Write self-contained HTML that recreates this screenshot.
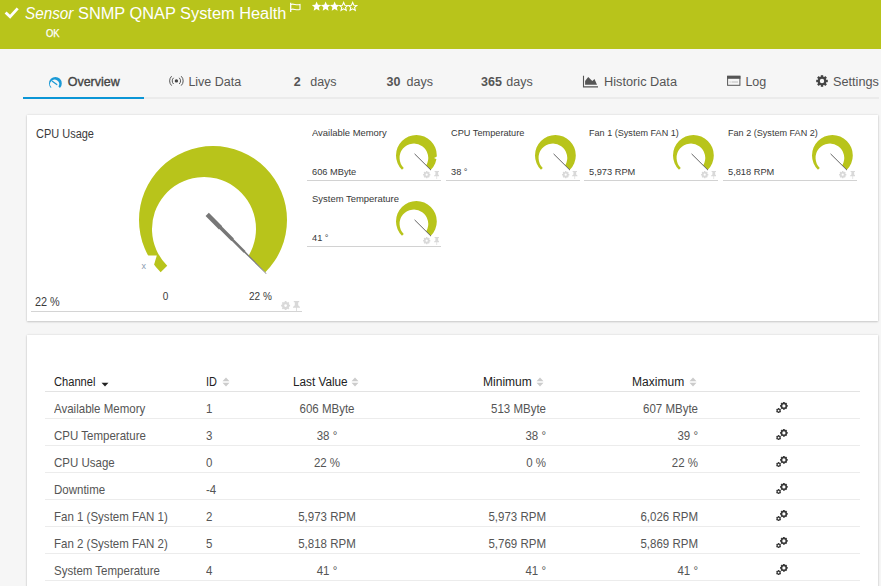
<!DOCTYPE html>
<html><head><meta charset="utf-8"><style>
html,body{margin:0;padding:0;width:881px;height:586px;overflow:hidden;background:#f6f6f6;font-family:"Liberation Sans",sans-serif;}
.a{position:absolute;white-space:pre;line-height:1;}
b{font-weight:bold}
</style></head><body>
<div class="a" style="left:0;top:0;width:881px;height:49px;background:#b8c41b"></div>
<svg class="a" style="left:4px;top:5px" width="16" height="15" viewBox="0 0 16 15"><path d="M1.6 7.4 L6.1 11.8 L13.7 3.4" fill="none" stroke="#fff" stroke-width="2.8"/></svg>
<div class="a" style="left:25px;top:5.86px;font-size:16px;color:#fff;transform:scaleX(0.955);transform-origin:0 0;"><i>Sensor</i></div>
<div class="a" style="left:78.3px;top:5.86px;font-size:16px;color:#fff;transform:scaleX(1.022);transform-origin:0 0;">SNMP QNAP System Health</div>
<div class="a" style="left:45.6px;top:28.21px;font-size:10.5px;color:#fff;transform:scaleX(0.9);transform-origin:0 0;-webkit-text-stroke:0.25px #fff">OK</div>
<svg class="a" style="left:284px;top:0px" width="22" height="16" viewBox="284 0 22 16"><path d="M290.7 2.8 V12" stroke="#fff" stroke-width="1.3"/><path d="M291 4.4 C293.8 3.4 296.2 5.6 300 4.4 V9.4 C296.2 10.6 293.8 8.4 291 9.4" fill="none" stroke="#fff" stroke-width="1.1"/></svg>
<svg class="a" style="left:311px;top:0px" width="50" height="13" viewBox="0 0 50 13"><path d="M5.60,1.60 L6.95,4.74 L10.36,5.05 L7.79,7.31 L8.54,10.65 L5.60,8.90 L2.66,10.65 L3.41,7.31 L0.84,5.05 L4.25,4.74Z" fill="#fff"/><path d="M14.62,1.60 L15.97,4.74 L19.38,5.05 L16.81,7.31 L17.56,10.65 L14.62,8.90 L11.68,10.65 L12.43,7.31 L9.86,5.05 L13.27,4.74Z" fill="#fff"/><path d="M23.64,1.60 L24.99,4.74 L28.40,5.05 L25.83,7.31 L26.58,10.65 L23.64,8.90 L20.70,10.65 L21.45,7.31 L18.88,5.05 L22.29,4.74Z" fill="#fff"/><path d="M32.66,2.40 L33.84,5.18 L36.84,5.44 L34.56,7.42 L35.25,10.36 L32.66,8.80 L30.07,10.36 L30.76,7.42 L28.48,5.44 L31.48,5.18Z" fill="none" stroke="#fff" stroke-width="1.1"/><path d="M41.68,2.40 L42.86,5.18 L45.86,5.44 L43.58,7.42 L44.27,10.36 L41.68,8.80 L39.09,10.36 L39.78,7.42 L37.50,5.44 L40.50,5.18Z" fill="none" stroke="#fff" stroke-width="1.1"/></svg>
<div class="a" style="left:23px;top:97px;width:856px;height:2px;background:#ebebeb"></div>
<div class="a" style="left:23px;top:97px;width:121px;height:2px;background:#0c96d6"></div>
<div class="a" style="left:67.7px;top:76.02px;font-size:12.5px;color:#444;-webkit-text-stroke:0.35px #444">Overview</div>
<div class="a" style="left:188.4px;top:76.02px;font-size:12.5px;color:#555;">Live Data</div>
<div class="a" style="left:293.7px;top:76.02px;font-size:12.5px;color:#555;"><b>2</b></div>
<div class="a" style="left:310.2px;top:76.02px;font-size:12.5px;color:#555;">days</div>
<div class="a" style="left:386.5px;top:76.02px;font-size:12.5px;color:#555;"><b>30</b></div>
<div class="a" style="left:406.5px;top:76.02px;font-size:12.5px;color:#555;">days</div>
<div class="a" style="left:481px;top:76.02px;font-size:12.5px;color:#555;"><b>365</b></div>
<div class="a" style="left:506.3px;top:76.02px;font-size:12.5px;color:#555;">days</div>
<div class="a" style="left:603.5px;top:76.02px;font-size:12.5px;color:#555;transform:scaleX(1.02);transform-origin:0 0;">Historic Data</div>
<div class="a" style="left:745.4px;top:76.02px;font-size:12.5px;color:#555;">Log</div>
<div class="a" style="left:833.3px;top:76.02px;font-size:12.5px;color:#555;transform:scaleX(1.015);transform-origin:0 0;">Settings</div>
<svg class="a" style="left:49.3px;top:76.6px;overflow:visible" width="12.8" height="12.8" viewBox="0 0 148 148"><path d="M21.67 126.33 A74 74 0 1 1 126.33 126.33 L109.65 109.65 A52 52 0 1 0 28.23 119.77 Z" fill="#1b9ad6"/></svg>
<svg class="a" style="left:45px;top:72px" width="22" height="18" viewBox="45 72 22 18"><path d="M52.3 81.2 L56.8 84.6" stroke="#1b9ad6" stroke-width="1.2" stroke-linecap="round"/></svg>
<svg class="a" style="left:165px;top:72px" width="22" height="18" viewBox="165 72 22 18"><circle cx="176.4" cy="80.9" r="1.7" fill="#444"/><path d="M173.6 77.8 A4.2 4.2 0 0 0 173.6 84 M179.2 77.8 A4.2 4.2 0 0 1 179.2 84" fill="none" stroke="#555" stroke-width="1"/><path d="M171.6 76.2 A6.6 6.6 0 0 0 171.6 85.6 M181.2 76.2 A6.6 6.6 0 0 1 181.2 85.6" fill="none" stroke="#555" stroke-width="1"/></svg>
<svg class="a" style="left:578px;top:70px" width="24" height="22" viewBox="578 70 24 22"><path d="M583.5 75.8 V86.9 H598" fill="none" stroke="#555" stroke-width="1.1"/><path d="M585.1 84.8 V81 L588.2 77 L592.3 81.1 L594.5 79 L597 84.8 Z" fill="#555"/></svg>
<svg class="a" style="left:722px;top:70px" width="24" height="22" viewBox="722 70 24 22"><rect x="727.6" y="76.3" width="12.3" height="9" fill="none" stroke="#555" stroke-width="1"/><rect x="727.1" y="75.8" width="13.3" height="3" fill="#555"/><path d="M729.5 82 H730.6 M731.6 82 H738" stroke="#bbb" stroke-width="1.2"/></svg>
<svg class="a" style="left:816px;top:75.4px" width="12" height="12" viewBox="-6 -6 12 12"><rect x="-1.2" y="-5.8" width="2.4" height="2.5" fill="#444" transform="rotate(0)"/><rect x="-1.2" y="-5.8" width="2.4" height="2.5" fill="#444" transform="rotate(45)"/><rect x="-1.2" y="-5.8" width="2.4" height="2.5" fill="#444" transform="rotate(90)"/><rect x="-1.2" y="-5.8" width="2.4" height="2.5" fill="#444" transform="rotate(135)"/><rect x="-1.2" y="-5.8" width="2.4" height="2.5" fill="#444" transform="rotate(180)"/><rect x="-1.2" y="-5.8" width="2.4" height="2.5" fill="#444" transform="rotate(225)"/><rect x="-1.2" y="-5.8" width="2.4" height="2.5" fill="#444" transform="rotate(270)"/><rect x="-1.2" y="-5.8" width="2.4" height="2.5" fill="#444" transform="rotate(315)"/><circle r="3.3" fill="none" stroke="#444" stroke-width="2.2"/></svg>
<div class="a" style="left:27px;top:115px;width:851px;height:206px;background:#fff;box-shadow:0 0 2px rgba(0,0,0,0.13),0 1px 2px rgba(0,0,0,0.15)"></div>
<div class="a" style="left:35.9px;top:127.84px;font-size:12px;color:#3a3a3a;transform:scaleX(0.915);transform-origin:0 0;">CPU Usage</div>
<svg class="a" style="left:139px;top:146px;overflow:visible" width="148" height="148" viewBox="0 0 148 148"><path d="M21.67 126.33 A74 74 0 1 1 126.33 126.33 L109.65 109.65 A52 52 0 1 0 28.23 119.77 Z" fill="#b8c41b"/><path d="M4 109.5 L17.8 109.5 L15.1 118.4 L8 123 Z" fill="#fff"/><path d="M66.57 69.92 L79.97 83.39 L80.32 83.04 L92.32 95.09 L92.67 94.74 L104.66 106.79 L105.01 106.44 L127.12 127.88 L127.48 127.52 L106.15 105.31 L106.50 104.95 L94.51 92.90 L94.87 92.55 L82.88 80.50 L83.23 80.15 L69.83 66.68 Z" fill="#777"/></svg>
<div class="a" style="left:141.6px;top:261.58px;font-size:9px;color:#8a9ab0;">x</div>
<div class="a" style="left:35.4px;top:295.62px;font-size:12.5px;color:#3a3a3a;transform:scaleX(0.87);transform-origin:0 0;">22 %</div>
<div class="a" style="left:162.7px;top:291.74px;font-size:10px;color:#3a3a3a;">0</div>
<div class="a" style="left:249px;top:291.74px;font-size:10px;color:#3a3a3a;">22 %</div>
<svg class="a" style="left:279.80px;top:299.70px" width="11.20" height="11.20" viewBox="279.80 299.70 11.20 11.20"><path d="M283.98 301.88 L284.50 301.71 L284.50 300.79 L286.30 300.79 L286.30 301.71 L286.82 301.88 L287.30 302.13 L287.96 301.48 L289.22 302.74 L288.57 303.40 L288.82 303.88 L288.99 304.40 L289.91 304.40 L289.91 306.20 L288.99 306.20 L288.82 306.72 L288.57 307.20 L289.22 307.86 L287.96 309.12 L287.30 308.47 L286.82 308.72 L286.30 308.89 L286.30 309.81 L284.50 309.81 L284.50 308.89 L283.98 308.72 L283.50 308.47 L282.84 309.12 L281.58 307.86 L282.23 307.20 L281.98 306.72 L281.81 306.20 L280.89 306.20 L280.89 304.40 L281.81 304.40 L281.98 303.88 L282.23 303.40 L281.58 302.74 L282.84 301.48 L283.50 302.13Z M286.75 305.30 A1.35 1.35 0 1 0 284.05 305.30 A1.35 1.35 0 1 0 286.75 305.30 Z" fill="#d9d9d9" fill-rule="evenodd"/></svg>
<svg class="a" style="left:293.00px;top:301.00px" width="7.00" height="10.00" viewBox="0 0 7 10"><path d="M0.8 0 H6.2 V1.3 H5.2 V4.3 L7 5.9 V6.7 H3.9 V10 H3.1 V6.7 H0 V5.9 L1.8 4.3 V1.3 H0.8 Z" fill="#d9d9d9"/></svg>
<div class="a" style="left:31px;top:311px;width:271px;height:1px;background:#d4d4d4"></div>
<div class="a" style="left:312.2px;top:127.77px;font-size:9.6px;color:#383838;transform:scaleX(0.982);transform-origin:0 0;">Available Memory</div>
<div class="a" style="left:312.2px;top:166.67px;font-size:9.6px;color:#383838;transform:scaleX(0.965);transform-origin:0 0;">606 MByte</div>
<svg class="a" style="left:396.1px;top:134.7px;overflow:visible" width="40.8" height="40.8" viewBox="0 0 148 148"><path d="M21.67 126.33 A74 74 0 1 1 126.33 126.33 L109.65 109.65 A52 52 0 1 0 28.23 119.77 Z" fill="#b8c41b"/><path d="M137.9 83.4 L149 77.8 L149 89 Z" fill="#fff"/><path d="M67.5 68.5 L127 127.6" stroke="#5a5a5a" stroke-width="3.4"/><path d="M66.57 69.92 L79.97 83.39 L80.32 83.04 L92.32 95.09 L92.67 94.74 L104.66 106.79 L105.01 106.44 L127.12 127.88 L127.48 127.52 L106.15 105.31 L106.50 104.95 L94.51 92.90 L94.87 92.55 L82.88 80.50 L83.23 80.15 L69.83 66.68 Z" fill="none"/></svg>
<svg class="a" style="left:422.30px;top:170.10px" width="9.40" height="9.40" viewBox="422.30 170.10 9.40 9.40"><path d="M425.85 172.03 L426.27 171.89 L426.28 171.17 L427.72 171.17 L427.73 171.89 L428.15 172.03 L428.54 172.23 L429.06 171.72 L430.08 172.74 L429.57 173.26 L429.77 173.65 L429.91 174.07 L430.63 174.08 L430.63 175.52 L429.91 175.53 L429.77 175.95 L429.57 176.34 L430.08 176.86 L429.06 177.88 L428.54 177.37 L428.15 177.57 L427.73 177.71 L427.72 178.43 L426.28 178.43 L426.27 177.71 L425.85 177.57 L425.46 177.37 L424.94 177.88 L423.92 176.86 L424.43 176.34 L424.23 175.95 L424.09 175.53 L423.37 175.52 L423.37 174.08 L424.09 174.07 L424.23 173.65 L424.43 173.26 L423.92 172.74 L424.94 171.72 L425.46 172.23Z M428.10 174.80 A1.1 1.1 0 1 0 425.90 174.80 A1.1 1.1 0 1 0 428.10 174.80 Z" fill="#d9d9d9" fill-rule="evenodd"/></svg>
<svg class="a" style="left:433.70px;top:171.30px" width="5.60" height="8.00" viewBox="0 0 7 10"><path d="M0.8 0 H6.2 V1.3 H5.2 V4.3 L7 5.9 V6.7 H3.9 V10 H3.1 V6.7 H0 V5.9 L1.8 4.3 V1.3 H0.8 Z" fill="#d9d9d9"/></svg>
<div class="a" style="left:307.0px;top:180px;width:134px;height:1px;background:#d2d2d2"></div>
<div class="a" style="left:450.79999999999995px;top:127.77px;font-size:9.6px;color:#383838;transform:scaleX(0.958);transform-origin:0 0;">CPU Temperature</div>
<div class="a" style="left:450.79999999999995px;top:166.67px;font-size:9.6px;color:#383838;transform:scaleX(0.965);transform-origin:0 0;">38 °</div>
<svg class="a" style="left:534.6999999999999px;top:134.7px;overflow:visible" width="40.8" height="40.8" viewBox="0 0 148 148"><path d="M21.67 126.33 A74 74 0 1 1 126.33 126.33 L109.65 109.65 A52 52 0 1 0 28.23 119.77 Z" fill="#b8c41b"/><path d="M67.5 68.5 L127 127.6" stroke="#5a5a5a" stroke-width="3.4"/><path d="M66.57 69.92 L79.97 83.39 L80.32 83.04 L92.32 95.09 L92.67 94.74 L104.66 106.79 L105.01 106.44 L127.12 127.88 L127.48 127.52 L106.15 105.31 L106.50 104.95 L94.51 92.90 L94.87 92.55 L82.88 80.50 L83.23 80.15 L69.83 66.68 Z" fill="none"/></svg>
<svg class="a" style="left:560.90px;top:170.10px" width="9.40" height="9.40" viewBox="560.90 170.10 9.40 9.40"><path d="M564.45 172.03 L564.87 171.89 L564.88 171.17 L566.32 171.17 L566.33 171.89 L566.75 172.03 L567.14 172.23 L567.66 171.72 L568.68 172.74 L568.17 173.26 L568.37 173.65 L568.51 174.07 L569.23 174.08 L569.23 175.52 L568.51 175.53 L568.37 175.95 L568.17 176.34 L568.68 176.86 L567.66 177.88 L567.14 177.37 L566.75 177.57 L566.33 177.71 L566.32 178.43 L564.88 178.43 L564.87 177.71 L564.45 177.57 L564.06 177.37 L563.54 177.88 L562.52 176.86 L563.03 176.34 L562.83 175.95 L562.69 175.53 L561.97 175.52 L561.97 174.08 L562.69 174.07 L562.83 173.65 L563.03 173.26 L562.52 172.74 L563.54 171.72 L564.06 172.23Z M566.70 174.80 A1.1 1.1 0 1 0 564.50 174.80 A1.1 1.1 0 1 0 566.70 174.80 Z" fill="#d9d9d9" fill-rule="evenodd"/></svg>
<svg class="a" style="left:572.30px;top:171.30px" width="5.60" height="8.00" viewBox="0 0 7 10"><path d="M0.8 0 H6.2 V1.3 H5.2 V4.3 L7 5.9 V6.7 H3.9 V10 H3.1 V6.7 H0 V5.9 L1.8 4.3 V1.3 H0.8 Z" fill="#d9d9d9"/></svg>
<div class="a" style="left:445.6px;top:180px;width:134px;height:1px;background:#d2d2d2"></div>
<div class="a" style="left:589.4px;top:127.77px;font-size:9.6px;color:#383838;transform:scaleX(0.946);transform-origin:0 0;">Fan 1 (System FAN 1)</div>
<div class="a" style="left:589.4px;top:166.67px;font-size:9.6px;color:#383838;transform:scaleX(0.965);transform-origin:0 0;">5,973 RPM</div>
<svg class="a" style="left:673.3px;top:134.7px;overflow:visible" width="40.8" height="40.8" viewBox="0 0 148 148"><path d="M21.67 126.33 A74 74 0 1 1 126.33 126.33 L109.65 109.65 A52 52 0 1 0 28.23 119.77 Z" fill="#b8c41b"/><path d="M67.5 68.5 L127 127.6" stroke="#5a5a5a" stroke-width="3.4"/><path d="M66.57 69.92 L79.97 83.39 L80.32 83.04 L92.32 95.09 L92.67 94.74 L104.66 106.79 L105.01 106.44 L127.12 127.88 L127.48 127.52 L106.15 105.31 L106.50 104.95 L94.51 92.90 L94.87 92.55 L82.88 80.50 L83.23 80.15 L69.83 66.68 Z" fill="none"/></svg>
<svg class="a" style="left:699.50px;top:170.10px" width="9.40" height="9.40" viewBox="699.50 170.10 9.40 9.40"><path d="M703.05 172.03 L703.47 171.89 L703.48 171.17 L704.92 171.17 L704.93 171.89 L705.35 172.03 L705.74 172.23 L706.26 171.72 L707.28 172.74 L706.77 173.26 L706.97 173.65 L707.11 174.07 L707.83 174.08 L707.83 175.52 L707.11 175.53 L706.97 175.95 L706.77 176.34 L707.28 176.86 L706.26 177.88 L705.74 177.37 L705.35 177.57 L704.93 177.71 L704.92 178.43 L703.48 178.43 L703.47 177.71 L703.05 177.57 L702.66 177.37 L702.14 177.88 L701.12 176.86 L701.63 176.34 L701.43 175.95 L701.29 175.53 L700.57 175.52 L700.57 174.08 L701.29 174.07 L701.43 173.65 L701.63 173.26 L701.12 172.74 L702.14 171.72 L702.66 172.23Z M705.30 174.80 A1.1 1.1 0 1 0 703.10 174.80 A1.1 1.1 0 1 0 705.30 174.80 Z" fill="#d9d9d9" fill-rule="evenodd"/></svg>
<svg class="a" style="left:710.90px;top:171.30px" width="5.60" height="8.00" viewBox="0 0 7 10"><path d="M0.8 0 H6.2 V1.3 H5.2 V4.3 L7 5.9 V6.7 H3.9 V10 H3.1 V6.7 H0 V5.9 L1.8 4.3 V1.3 H0.8 Z" fill="#d9d9d9"/></svg>
<div class="a" style="left:584.2px;top:180px;width:134px;height:1px;background:#d2d2d2"></div>
<div class="a" style="left:728.0px;top:127.77px;font-size:9.6px;color:#383838;transform:scaleX(0.946);transform-origin:0 0;">Fan 2 (System FAN 2)</div>
<div class="a" style="left:728.0px;top:166.67px;font-size:9.6px;color:#383838;transform:scaleX(0.965);transform-origin:0 0;">5,818 RPM</div>
<svg class="a" style="left:811.9px;top:134.7px;overflow:visible" width="40.8" height="40.8" viewBox="0 0 148 148"><path d="M21.67 126.33 A74 74 0 1 1 126.33 126.33 L109.65 109.65 A52 52 0 1 0 28.23 119.77 Z" fill="#b8c41b"/><path d="M67.5 68.5 L127 127.6" stroke="#5a5a5a" stroke-width="3.4"/><path d="M66.57 69.92 L79.97 83.39 L80.32 83.04 L92.32 95.09 L92.67 94.74 L104.66 106.79 L105.01 106.44 L127.12 127.88 L127.48 127.52 L106.15 105.31 L106.50 104.95 L94.51 92.90 L94.87 92.55 L82.88 80.50 L83.23 80.15 L69.83 66.68 Z" fill="none"/></svg>
<svg class="a" style="left:838.10px;top:170.10px" width="9.40" height="9.40" viewBox="838.10 170.10 9.40 9.40"><path d="M841.65 172.03 L842.07 171.89 L842.08 171.17 L843.52 171.17 L843.53 171.89 L843.95 172.03 L844.34 172.23 L844.86 171.72 L845.88 172.74 L845.37 173.26 L845.57 173.65 L845.71 174.07 L846.43 174.08 L846.43 175.52 L845.71 175.53 L845.57 175.95 L845.37 176.34 L845.88 176.86 L844.86 177.88 L844.34 177.37 L843.95 177.57 L843.53 177.71 L843.52 178.43 L842.08 178.43 L842.07 177.71 L841.65 177.57 L841.26 177.37 L840.74 177.88 L839.72 176.86 L840.23 176.34 L840.03 175.95 L839.89 175.53 L839.17 175.52 L839.17 174.08 L839.89 174.07 L840.03 173.65 L840.23 173.26 L839.72 172.74 L840.74 171.72 L841.26 172.23Z M843.90 174.80 A1.1 1.1 0 1 0 841.70 174.80 A1.1 1.1 0 1 0 843.90 174.80 Z" fill="#d9d9d9" fill-rule="evenodd"/></svg>
<svg class="a" style="left:849.50px;top:171.30px" width="5.60" height="8.00" viewBox="0 0 7 10"><path d="M0.8 0 H6.2 V1.3 H5.2 V4.3 L7 5.9 V6.7 H3.9 V10 H3.1 V6.7 H0 V5.9 L1.8 4.3 V1.3 H0.8 Z" fill="#d9d9d9"/></svg>
<div class="a" style="left:722.8px;top:180px;width:134px;height:1px;background:#d2d2d2"></div>
<div class="a" style="left:312.2px;top:193.77px;font-size:9.6px;color:#383838;transform:scaleX(0.985);transform-origin:0 0;">System Temperature</div>
<div class="a" style="left:312.2px;top:232.67px;font-size:9.6px;color:#383838;transform:scaleX(0.965);transform-origin:0 0;">41 °</div>
<svg class="a" style="left:396.1px;top:200.7px;overflow:visible" width="40.8" height="40.8" viewBox="0 0 148 148"><path d="M21.67 126.33 A74 74 0 1 1 126.33 126.33 L109.65 109.65 A52 52 0 1 0 28.23 119.77 Z" fill="#b8c41b"/><path d="M67.5 68.5 L127 127.6" stroke="#5a5a5a" stroke-width="3.4"/><path d="M66.57 69.92 L79.97 83.39 L80.32 83.04 L92.32 95.09 L92.67 94.74 L104.66 106.79 L105.01 106.44 L127.12 127.88 L127.48 127.52 L106.15 105.31 L106.50 104.95 L94.51 92.90 L94.87 92.55 L82.88 80.50 L83.23 80.15 L69.83 66.68 Z" fill="none"/></svg>
<svg class="a" style="left:422.30px;top:236.10px" width="9.40" height="9.40" viewBox="422.30 236.10 9.40 9.40"><path d="M425.85 238.03 L426.27 237.89 L426.28 237.17 L427.72 237.17 L427.73 237.89 L428.15 238.03 L428.54 238.23 L429.06 237.72 L430.08 238.74 L429.57 239.26 L429.77 239.65 L429.91 240.07 L430.63 240.08 L430.63 241.52 L429.91 241.53 L429.77 241.95 L429.57 242.34 L430.08 242.86 L429.06 243.88 L428.54 243.37 L428.15 243.57 L427.73 243.71 L427.72 244.43 L426.28 244.43 L426.27 243.71 L425.85 243.57 L425.46 243.37 L424.94 243.88 L423.92 242.86 L424.43 242.34 L424.23 241.95 L424.09 241.53 L423.37 241.52 L423.37 240.08 L424.09 240.07 L424.23 239.65 L424.43 239.26 L423.92 238.74 L424.94 237.72 L425.46 238.23Z M428.10 240.80 A1.1 1.1 0 1 0 425.90 240.80 A1.1 1.1 0 1 0 428.10 240.80 Z" fill="#d9d9d9" fill-rule="evenodd"/></svg>
<svg class="a" style="left:433.70px;top:237.30px" width="5.60" height="8.00" viewBox="0 0 7 10"><path d="M0.8 0 H6.2 V1.3 H5.2 V4.3 L7 5.9 V6.7 H3.9 V10 H3.1 V6.7 H0 V5.9 L1.8 4.3 V1.3 H0.8 Z" fill="#d9d9d9"/></svg>
<div class="a" style="left:307.0px;top:246px;width:134px;height:1px;background:#d2d2d2"></div>
<div class="a" style="left:27px;top:335px;width:851px;height:260px;background:#fff;box-shadow:0 0 2px rgba(0,0,0,0.13),0 1px 2px rgba(0,0,0,0.15)"></div>
<div class="a" style="left:53.8px;top:375.92px;font-size:12.5px;color:#222;transform:scaleX(0.889);transform-origin:0 0;">Channel</div>
<svg class="a" style="left:101px;top:382px" width="8" height="5" viewBox="0 0 8 5"><path d="M0.5 0.8 H7.5 L4 4.5 Z" fill="#222"/></svg>
<div class="a" style="left:206px;top:375.92px;font-size:12.5px;color:#222;transform:scaleX(0.874);transform-origin:0 0;">ID</div>
<svg class="a" style="left:221.5px;top:377px" width="8" height="10" viewBox="0 0 8 10"><path d="M0.5 4.2 L4 0.5 L7.5 4.2 Z M0.5 5.8 H7.5 L4 9.5 Z" fill="#ccc"/></svg>
<div class="a" style="left:292.7px;top:375.92px;font-size:12.5px;color:#222;transform:scaleX(0.94);transform-origin:0 0;">Last Value</div>
<svg class="a" style="left:351px;top:377px" width="8" height="10" viewBox="0 0 8 10"><path d="M0.5 4.2 L4 0.5 L7.5 4.2 Z M0.5 5.8 H7.5 L4 9.5 Z" fill="#ccc"/></svg>
<div class="a" style="left:482.5px;top:375.92px;font-size:12.5px;color:#222;transform:scaleX(0.963);transform-origin:0 0;">Minimum</div>
<svg class="a" style="left:536px;top:377px" width="8" height="10" viewBox="0 0 8 10"><path d="M0.5 4.2 L4 0.5 L7.5 4.2 Z M0.5 5.8 H7.5 L4 9.5 Z" fill="#ccc"/></svg>
<div class="a" style="left:631.9px;top:375.92px;font-size:12.5px;color:#222;transform:scaleX(0.963);transform-origin:0 0;">Maximum</div>
<svg class="a" style="left:688.5px;top:377px" width="8" height="10" viewBox="0 0 8 10"><path d="M0.5 4.2 L4 0.5 L7.5 4.2 Z M0.5 5.8 H7.5 L4 9.5 Z" fill="#ccc"/></svg>
<div class="a" style="left:45px;top:391px;width:815px;height:1px;background:#e3e3e3"></div>
<div class="a" style="left:54px;top:401.50px;font-size:13px;color:#555;transform:scaleX(0.885);transform-origin:0 0;">Available Memory</div>
<div class="a" style="left:206px;top:401.50px;font-size:13px;color:#555;transform:scaleX(0.885);transform-origin:0 0;">1</div>
<div class="a" style="left:177.2px;width:300px;text-align:center;top:401.50px;font-size:13px;color:#555;transform:scaleX(0.885);transform-origin:150px 0">606 MByte</div>
<div class="a" style="left:245.5px;width:300px;text-align:right;top:401.50px;font-size:13px;color:#555;transform:scaleX(0.885);transform-origin:300px 0">513 MByte</div>
<div class="a" style="left:397.5px;width:300px;text-align:right;top:401.50px;font-size:13px;color:#555;transform:scaleX(0.885);transform-origin:300px 0">607 MByte</div>
<svg class="a" style="left:779.40px;top:400.50px" width="9.80" height="9.80" viewBox="779.40 400.50 9.80 9.80"><path d="M783.04 402.35 L783.42 402.22 L783.46 401.59 L785.14 401.59 L785.18 402.22 L785.56 402.35 L785.93 402.53 L786.40 402.12 L787.58 403.30 L787.17 403.77 L787.35 404.14 L787.48 404.52 L788.11 404.56 L788.11 406.24 L787.48 406.28 L787.35 406.66 L787.17 407.03 L787.58 407.50 L786.40 408.68 L785.93 408.27 L785.56 408.45 L785.18 408.58 L785.14 409.21 L783.46 409.21 L783.42 408.58 L783.04 408.45 L782.67 408.27 L782.20 408.68 L781.02 407.50 L781.43 407.03 L781.25 406.66 L781.12 406.28 L780.49 406.24 L780.49 404.56 L781.12 404.52 L781.25 404.14 L781.43 403.77 L781.02 403.30 L782.20 402.12 L782.67 402.53Z M785.90 405.40 A1.6 1.6 0 1 0 782.70 405.40 A1.6 1.6 0 1 0 785.90 405.40 Z" fill="#383838" fill-rule="evenodd"/></svg><svg class="a" style="left:775.10px;top:406.90px" width="7.20" height="7.20" viewBox="775.10 406.90 7.20 7.20"><path d="M777.65 408.68 L777.96 408.53 L777.96 408.01 L779.44 408.01 L779.44 408.53 L779.75 408.68 L780.03 408.88 L780.49 408.61 L781.23 409.89 L780.77 410.16 L780.80 410.50 L780.77 410.84 L781.23 411.11 L780.49 412.39 L780.03 412.12 L779.75 412.32 L779.44 412.47 L779.44 412.99 L777.96 412.99 L777.96 412.47 L777.65 412.32 L777.37 412.12 L776.91 412.39 L776.17 411.11 L776.63 410.84 L776.60 410.50 L776.63 410.16 L776.17 409.89 L776.91 408.61 L777.37 408.88Z M779.55 410.50 A0.85 0.85 0 1 0 777.85 410.50 A0.85 0.85 0 1 0 779.55 410.50 Z" fill="#383838" fill-rule="evenodd"/></svg>
<div class="a" style="left:45px;top:418px;width:815px;height:1px;background:#ececec"></div>
<div class="a" style="left:54px;top:428.50px;font-size:13px;color:#555;transform:scaleX(0.885);transform-origin:0 0;">CPU Temperature</div>
<div class="a" style="left:206px;top:428.50px;font-size:13px;color:#555;transform:scaleX(0.885);transform-origin:0 0;">3</div>
<div class="a" style="left:177.2px;width:300px;text-align:center;top:428.50px;font-size:13px;color:#555;transform:scaleX(0.885);transform-origin:150px 0">38 °</div>
<div class="a" style="left:245.5px;width:300px;text-align:right;top:428.50px;font-size:13px;color:#555;transform:scaleX(0.885);transform-origin:300px 0">38 °</div>
<div class="a" style="left:397.5px;width:300px;text-align:right;top:428.50px;font-size:13px;color:#555;transform:scaleX(0.885);transform-origin:300px 0">39 °</div>
<svg class="a" style="left:779.40px;top:427.50px" width="9.80" height="9.80" viewBox="779.40 427.50 9.80 9.80"><path d="M783.04 429.35 L783.42 429.22 L783.46 428.59 L785.14 428.59 L785.18 429.22 L785.56 429.35 L785.93 429.53 L786.40 429.12 L787.58 430.30 L787.17 430.77 L787.35 431.14 L787.48 431.52 L788.11 431.56 L788.11 433.24 L787.48 433.28 L787.35 433.66 L787.17 434.03 L787.58 434.50 L786.40 435.68 L785.93 435.27 L785.56 435.45 L785.18 435.58 L785.14 436.21 L783.46 436.21 L783.42 435.58 L783.04 435.45 L782.67 435.27 L782.20 435.68 L781.02 434.50 L781.43 434.03 L781.25 433.66 L781.12 433.28 L780.49 433.24 L780.49 431.56 L781.12 431.52 L781.25 431.14 L781.43 430.77 L781.02 430.30 L782.20 429.12 L782.67 429.53Z M785.90 432.40 A1.6 1.6 0 1 0 782.70 432.40 A1.6 1.6 0 1 0 785.90 432.40 Z" fill="#383838" fill-rule="evenodd"/></svg><svg class="a" style="left:775.10px;top:433.90px" width="7.20" height="7.20" viewBox="775.10 433.90 7.20 7.20"><path d="M777.65 435.68 L777.96 435.53 L777.96 435.01 L779.44 435.01 L779.44 435.53 L779.75 435.68 L780.03 435.88 L780.49 435.61 L781.23 436.89 L780.77 437.16 L780.80 437.50 L780.77 437.84 L781.23 438.11 L780.49 439.39 L780.03 439.12 L779.75 439.32 L779.44 439.47 L779.44 439.99 L777.96 439.99 L777.96 439.47 L777.65 439.32 L777.37 439.12 L776.91 439.39 L776.17 438.11 L776.63 437.84 L776.60 437.50 L776.63 437.16 L776.17 436.89 L776.91 435.61 L777.37 435.88Z M779.55 437.50 A0.85 0.85 0 1 0 777.85 437.50 A0.85 0.85 0 1 0 779.55 437.50 Z" fill="#383838" fill-rule="evenodd"/></svg>
<div class="a" style="left:45px;top:445px;width:815px;height:1px;background:#ececec"></div>
<div class="a" style="left:54px;top:455.50px;font-size:13px;color:#555;transform:scaleX(0.885);transform-origin:0 0;">CPU Usage</div>
<div class="a" style="left:206px;top:455.50px;font-size:13px;color:#555;transform:scaleX(0.885);transform-origin:0 0;">0</div>
<div class="a" style="left:177.2px;width:300px;text-align:center;top:455.50px;font-size:13px;color:#555;transform:scaleX(0.885);transform-origin:150px 0">22 %</div>
<div class="a" style="left:245.5px;width:300px;text-align:right;top:455.50px;font-size:13px;color:#555;transform:scaleX(0.885);transform-origin:300px 0">0 %</div>
<div class="a" style="left:397.5px;width:300px;text-align:right;top:455.50px;font-size:13px;color:#555;transform:scaleX(0.885);transform-origin:300px 0">22 %</div>
<svg class="a" style="left:779.40px;top:454.50px" width="9.80" height="9.80" viewBox="779.40 454.50 9.80 9.80"><path d="M783.04 456.35 L783.42 456.22 L783.46 455.59 L785.14 455.59 L785.18 456.22 L785.56 456.35 L785.93 456.53 L786.40 456.12 L787.58 457.30 L787.17 457.77 L787.35 458.14 L787.48 458.52 L788.11 458.56 L788.11 460.24 L787.48 460.28 L787.35 460.66 L787.17 461.03 L787.58 461.50 L786.40 462.68 L785.93 462.27 L785.56 462.45 L785.18 462.58 L785.14 463.21 L783.46 463.21 L783.42 462.58 L783.04 462.45 L782.67 462.27 L782.20 462.68 L781.02 461.50 L781.43 461.03 L781.25 460.66 L781.12 460.28 L780.49 460.24 L780.49 458.56 L781.12 458.52 L781.25 458.14 L781.43 457.77 L781.02 457.30 L782.20 456.12 L782.67 456.53Z M785.90 459.40 A1.6 1.6 0 1 0 782.70 459.40 A1.6 1.6 0 1 0 785.90 459.40 Z" fill="#383838" fill-rule="evenodd"/></svg><svg class="a" style="left:775.10px;top:460.90px" width="7.20" height="7.20" viewBox="775.10 460.90 7.20 7.20"><path d="M777.65 462.68 L777.96 462.53 L777.96 462.01 L779.44 462.01 L779.44 462.53 L779.75 462.68 L780.03 462.88 L780.49 462.61 L781.23 463.89 L780.77 464.16 L780.80 464.50 L780.77 464.84 L781.23 465.11 L780.49 466.39 L780.03 466.12 L779.75 466.32 L779.44 466.47 L779.44 466.99 L777.96 466.99 L777.96 466.47 L777.65 466.32 L777.37 466.12 L776.91 466.39 L776.17 465.11 L776.63 464.84 L776.60 464.50 L776.63 464.16 L776.17 463.89 L776.91 462.61 L777.37 462.88Z M779.55 464.50 A0.85 0.85 0 1 0 777.85 464.50 A0.85 0.85 0 1 0 779.55 464.50 Z" fill="#383838" fill-rule="evenodd"/></svg>
<div class="a" style="left:45px;top:472px;width:815px;height:1px;background:#ececec"></div>
<div class="a" style="left:54px;top:482.50px;font-size:13px;color:#555;transform:scaleX(0.885);transform-origin:0 0;">Downtime</div>
<div class="a" style="left:206px;top:482.50px;font-size:13px;color:#555;transform:scaleX(0.885);transform-origin:0 0;">-4</div>
<div class="a" style="left:177.2px;width:300px;text-align:center;top:482.50px;font-size:13px;color:#555;transform:scaleX(0.885);transform-origin:150px 0"></div>
<div class="a" style="left:245.5px;width:300px;text-align:right;top:482.50px;font-size:13px;color:#555;transform:scaleX(0.885);transform-origin:300px 0"></div>
<div class="a" style="left:397.5px;width:300px;text-align:right;top:482.50px;font-size:13px;color:#555;transform:scaleX(0.885);transform-origin:300px 0"></div>
<svg class="a" style="left:779.40px;top:481.50px" width="9.80" height="9.80" viewBox="779.40 481.50 9.80 9.80"><path d="M783.04 483.35 L783.42 483.22 L783.46 482.59 L785.14 482.59 L785.18 483.22 L785.56 483.35 L785.93 483.53 L786.40 483.12 L787.58 484.30 L787.17 484.77 L787.35 485.14 L787.48 485.52 L788.11 485.56 L788.11 487.24 L787.48 487.28 L787.35 487.66 L787.17 488.03 L787.58 488.50 L786.40 489.68 L785.93 489.27 L785.56 489.45 L785.18 489.58 L785.14 490.21 L783.46 490.21 L783.42 489.58 L783.04 489.45 L782.67 489.27 L782.20 489.68 L781.02 488.50 L781.43 488.03 L781.25 487.66 L781.12 487.28 L780.49 487.24 L780.49 485.56 L781.12 485.52 L781.25 485.14 L781.43 484.77 L781.02 484.30 L782.20 483.12 L782.67 483.53Z M785.90 486.40 A1.6 1.6 0 1 0 782.70 486.40 A1.6 1.6 0 1 0 785.90 486.40 Z" fill="#383838" fill-rule="evenodd"/></svg><svg class="a" style="left:775.10px;top:487.90px" width="7.20" height="7.20" viewBox="775.10 487.90 7.20 7.20"><path d="M777.65 489.68 L777.96 489.53 L777.96 489.01 L779.44 489.01 L779.44 489.53 L779.75 489.68 L780.03 489.88 L780.49 489.61 L781.23 490.89 L780.77 491.16 L780.80 491.50 L780.77 491.84 L781.23 492.11 L780.49 493.39 L780.03 493.12 L779.75 493.32 L779.44 493.47 L779.44 493.99 L777.96 493.99 L777.96 493.47 L777.65 493.32 L777.37 493.12 L776.91 493.39 L776.17 492.11 L776.63 491.84 L776.60 491.50 L776.63 491.16 L776.17 490.89 L776.91 489.61 L777.37 489.88Z M779.55 491.50 A0.85 0.85 0 1 0 777.85 491.50 A0.85 0.85 0 1 0 779.55 491.50 Z" fill="#383838" fill-rule="evenodd"/></svg>
<div class="a" style="left:45px;top:499px;width:815px;height:1px;background:#ececec"></div>
<div class="a" style="left:54px;top:509.50px;font-size:13px;color:#555;transform:scaleX(0.885);transform-origin:0 0;">Fan 1 (System FAN 1)</div>
<div class="a" style="left:206px;top:509.50px;font-size:13px;color:#555;transform:scaleX(0.885);transform-origin:0 0;">2</div>
<div class="a" style="left:177.2px;width:300px;text-align:center;top:509.50px;font-size:13px;color:#555;transform:scaleX(0.885);transform-origin:150px 0">5,973 RPM</div>
<div class="a" style="left:245.5px;width:300px;text-align:right;top:509.50px;font-size:13px;color:#555;transform:scaleX(0.885);transform-origin:300px 0">5,973 RPM</div>
<div class="a" style="left:397.5px;width:300px;text-align:right;top:509.50px;font-size:13px;color:#555;transform:scaleX(0.885);transform-origin:300px 0">6,026 RPM</div>
<svg class="a" style="left:779.40px;top:508.50px" width="9.80" height="9.80" viewBox="779.40 508.50 9.80 9.80"><path d="M783.04 510.35 L783.42 510.22 L783.46 509.59 L785.14 509.59 L785.18 510.22 L785.56 510.35 L785.93 510.53 L786.40 510.12 L787.58 511.30 L787.17 511.77 L787.35 512.14 L787.48 512.52 L788.11 512.56 L788.11 514.24 L787.48 514.28 L787.35 514.66 L787.17 515.03 L787.58 515.50 L786.40 516.68 L785.93 516.27 L785.56 516.45 L785.18 516.58 L785.14 517.21 L783.46 517.21 L783.42 516.58 L783.04 516.45 L782.67 516.27 L782.20 516.68 L781.02 515.50 L781.43 515.03 L781.25 514.66 L781.12 514.28 L780.49 514.24 L780.49 512.56 L781.12 512.52 L781.25 512.14 L781.43 511.77 L781.02 511.30 L782.20 510.12 L782.67 510.53Z M785.90 513.40 A1.6 1.6 0 1 0 782.70 513.40 A1.6 1.6 0 1 0 785.90 513.40 Z" fill="#383838" fill-rule="evenodd"/></svg><svg class="a" style="left:775.10px;top:514.90px" width="7.20" height="7.20" viewBox="775.10 514.90 7.20 7.20"><path d="M777.65 516.68 L777.96 516.53 L777.96 516.01 L779.44 516.01 L779.44 516.53 L779.75 516.68 L780.03 516.88 L780.49 516.61 L781.23 517.89 L780.77 518.16 L780.80 518.50 L780.77 518.84 L781.23 519.11 L780.49 520.39 L780.03 520.12 L779.75 520.32 L779.44 520.47 L779.44 520.99 L777.96 520.99 L777.96 520.47 L777.65 520.32 L777.37 520.12 L776.91 520.39 L776.17 519.11 L776.63 518.84 L776.60 518.50 L776.63 518.16 L776.17 517.89 L776.91 516.61 L777.37 516.88Z M779.55 518.50 A0.85 0.85 0 1 0 777.85 518.50 A0.85 0.85 0 1 0 779.55 518.50 Z" fill="#383838" fill-rule="evenodd"/></svg>
<div class="a" style="left:45px;top:526px;width:815px;height:1px;background:#ececec"></div>
<div class="a" style="left:54px;top:536.50px;font-size:13px;color:#555;transform:scaleX(0.885);transform-origin:0 0;">Fan 2 (System FAN 2)</div>
<div class="a" style="left:206px;top:536.50px;font-size:13px;color:#555;transform:scaleX(0.885);transform-origin:0 0;">5</div>
<div class="a" style="left:177.2px;width:300px;text-align:center;top:536.50px;font-size:13px;color:#555;transform:scaleX(0.885);transform-origin:150px 0">5,818 RPM</div>
<div class="a" style="left:245.5px;width:300px;text-align:right;top:536.50px;font-size:13px;color:#555;transform:scaleX(0.885);transform-origin:300px 0">5,769 RPM</div>
<div class="a" style="left:397.5px;width:300px;text-align:right;top:536.50px;font-size:13px;color:#555;transform:scaleX(0.885);transform-origin:300px 0">5,869 RPM</div>
<svg class="a" style="left:779.40px;top:535.50px" width="9.80" height="9.80" viewBox="779.40 535.50 9.80 9.80"><path d="M783.04 537.35 L783.42 537.22 L783.46 536.59 L785.14 536.59 L785.18 537.22 L785.56 537.35 L785.93 537.53 L786.40 537.12 L787.58 538.30 L787.17 538.77 L787.35 539.14 L787.48 539.52 L788.11 539.56 L788.11 541.24 L787.48 541.28 L787.35 541.66 L787.17 542.03 L787.58 542.50 L786.40 543.68 L785.93 543.27 L785.56 543.45 L785.18 543.58 L785.14 544.21 L783.46 544.21 L783.42 543.58 L783.04 543.45 L782.67 543.27 L782.20 543.68 L781.02 542.50 L781.43 542.03 L781.25 541.66 L781.12 541.28 L780.49 541.24 L780.49 539.56 L781.12 539.52 L781.25 539.14 L781.43 538.77 L781.02 538.30 L782.20 537.12 L782.67 537.53Z M785.90 540.40 A1.6 1.6 0 1 0 782.70 540.40 A1.6 1.6 0 1 0 785.90 540.40 Z" fill="#383838" fill-rule="evenodd"/></svg><svg class="a" style="left:775.10px;top:541.90px" width="7.20" height="7.20" viewBox="775.10 541.90 7.20 7.20"><path d="M777.65 543.68 L777.96 543.53 L777.96 543.01 L779.44 543.01 L779.44 543.53 L779.75 543.68 L780.03 543.88 L780.49 543.61 L781.23 544.89 L780.77 545.16 L780.80 545.50 L780.77 545.84 L781.23 546.11 L780.49 547.39 L780.03 547.12 L779.75 547.32 L779.44 547.47 L779.44 547.99 L777.96 547.99 L777.96 547.47 L777.65 547.32 L777.37 547.12 L776.91 547.39 L776.17 546.11 L776.63 545.84 L776.60 545.50 L776.63 545.16 L776.17 544.89 L776.91 543.61 L777.37 543.88Z M779.55 545.50 A0.85 0.85 0 1 0 777.85 545.50 A0.85 0.85 0 1 0 779.55 545.50 Z" fill="#383838" fill-rule="evenodd"/></svg>
<div class="a" style="left:45px;top:553px;width:815px;height:1px;background:#ececec"></div>
<div class="a" style="left:54px;top:563.50px;font-size:13px;color:#555;transform:scaleX(0.885);transform-origin:0 0;">System Temperature</div>
<div class="a" style="left:206px;top:563.50px;font-size:13px;color:#555;transform:scaleX(0.885);transform-origin:0 0;">4</div>
<div class="a" style="left:177.2px;width:300px;text-align:center;top:563.50px;font-size:13px;color:#555;transform:scaleX(0.885);transform-origin:150px 0">41 °</div>
<div class="a" style="left:245.5px;width:300px;text-align:right;top:563.50px;font-size:13px;color:#555;transform:scaleX(0.885);transform-origin:300px 0">41 °</div>
<div class="a" style="left:397.5px;width:300px;text-align:right;top:563.50px;font-size:13px;color:#555;transform:scaleX(0.885);transform-origin:300px 0">41 °</div>
<svg class="a" style="left:779.40px;top:562.50px" width="9.80" height="9.80" viewBox="779.40 562.50 9.80 9.80"><path d="M783.04 564.35 L783.42 564.22 L783.46 563.59 L785.14 563.59 L785.18 564.22 L785.56 564.35 L785.93 564.53 L786.40 564.12 L787.58 565.30 L787.17 565.77 L787.35 566.14 L787.48 566.52 L788.11 566.56 L788.11 568.24 L787.48 568.28 L787.35 568.66 L787.17 569.03 L787.58 569.50 L786.40 570.68 L785.93 570.27 L785.56 570.45 L785.18 570.58 L785.14 571.21 L783.46 571.21 L783.42 570.58 L783.04 570.45 L782.67 570.27 L782.20 570.68 L781.02 569.50 L781.43 569.03 L781.25 568.66 L781.12 568.28 L780.49 568.24 L780.49 566.56 L781.12 566.52 L781.25 566.14 L781.43 565.77 L781.02 565.30 L782.20 564.12 L782.67 564.53Z M785.90 567.40 A1.6 1.6 0 1 0 782.70 567.40 A1.6 1.6 0 1 0 785.90 567.40 Z" fill="#383838" fill-rule="evenodd"/></svg><svg class="a" style="left:775.10px;top:568.90px" width="7.20" height="7.20" viewBox="775.10 568.90 7.20 7.20"><path d="M777.65 570.68 L777.96 570.53 L777.96 570.01 L779.44 570.01 L779.44 570.53 L779.75 570.68 L780.03 570.88 L780.49 570.61 L781.23 571.89 L780.77 572.16 L780.80 572.50 L780.77 572.84 L781.23 573.11 L780.49 574.39 L780.03 574.12 L779.75 574.32 L779.44 574.47 L779.44 574.99 L777.96 574.99 L777.96 574.47 L777.65 574.32 L777.37 574.12 L776.91 574.39 L776.17 573.11 L776.63 572.84 L776.60 572.50 L776.63 572.16 L776.17 571.89 L776.91 570.61 L777.37 570.88Z M779.55 572.50 A0.85 0.85 0 1 0 777.85 572.50 A0.85 0.85 0 1 0 779.55 572.50 Z" fill="#383838" fill-rule="evenodd"/></svg>
<div class="a" style="left:45px;top:580px;width:815px;height:1px;background:#ececec"></div>
</body></html>
